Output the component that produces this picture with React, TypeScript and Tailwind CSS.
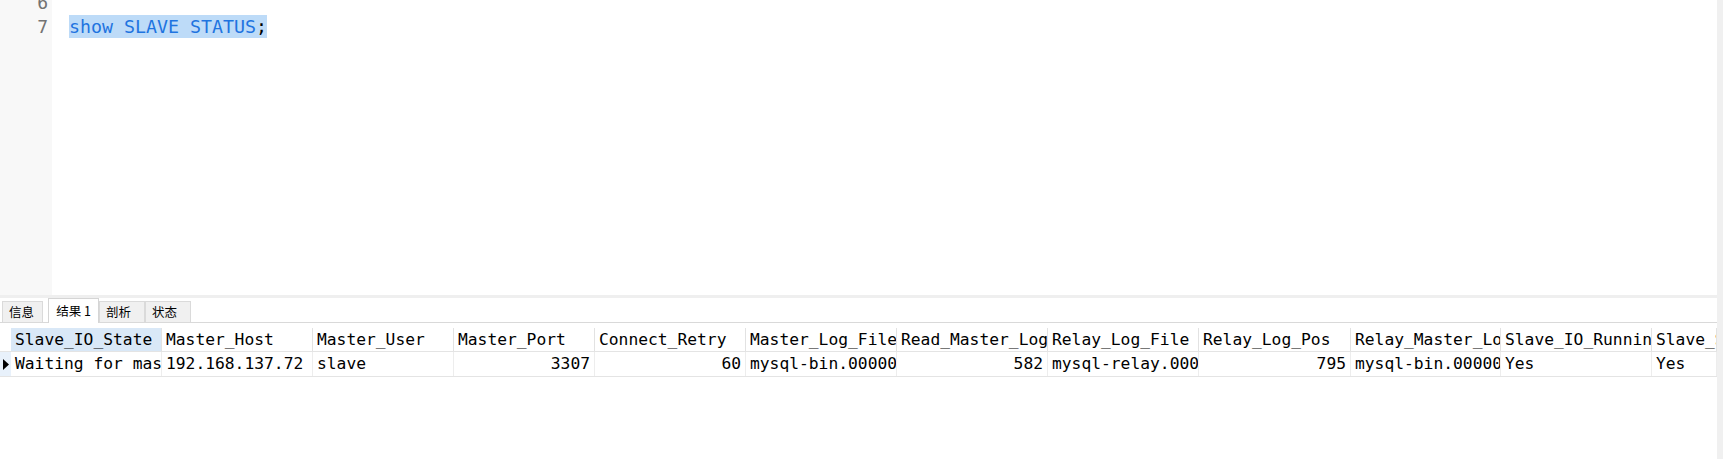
import React from 'react';

const mono = { fontFamily: '"DejaVu Sans Mono", "Liberation Mono", monospace' };

interface Column {
    name: string;
    value: string;
    width: string;
    right?: boolean;
}

const columns: Column[] = [
    { name: 'Slave_IO_State', value: 'Waiting for master to send event', width: 'w-[151px]' },
    { name: 'Master_Host', value: '192.168.137.72', width: 'w-[151px]' },
    { name: 'Master_User', value: 'slave', width: 'w-[141px]' },
    { name: 'Master_Port', value: '3307', width: 'w-[141px]', right: true },
    { name: 'Connect_Retry', value: '60', width: 'w-[151px]', right: true },
    { name: 'Master_Log_File', value: 'mysql-bin.000003', width: 'w-[151px]' },
    { name: 'Read_Master_Log_Pos', value: '582', width: 'w-[151px]', right: true },
    { name: 'Relay_Log_File', value: 'mysql-relay.000002', width: 'w-[151px]' },
    { name: 'Relay_Log_Pos', value: '795', width: 'w-[152px]', right: true },
    { name: 'Relay_Master_Log_File', value: 'mysql-bin.000003', width: 'w-[150px]' },
    { name: 'Slave_IO_Running', value: 'Yes', width: 'w-[151px]' },
    { name: 'Slave_SQL_Running', value: 'Yes', width: 'flex-1' },
];

const tabs = [
    { label: '信息', width: 'w-[41px]', active: false },
    { label: '结果 1', width: 'w-[51px]', active: true },
    { label: '剖析', width: 'w-[46px]', active: false },
    { label: '状态', width: 'w-[46px]', active: false },
];

export default function App() {
    return (
        <div className="w-[1723px] h-[459px] bg-white flex overflow-hidden text-black">
            <div className="flex-1 flex flex-col min-w-0">
                {/* editor */}
                <div className="h-[295px] flex shrink-0 overflow-hidden">
                    <div className="w-[52px] bg-[#f8f8f8] flex flex-col items-end pr-[4px] mt-[-9px] text-[18px] text-[#737373]" style={mono}>
                        <div className="h-[24px] leading-[24px]">6</div>
                        <div className="h-[24px] leading-[24px]">7</div>
                    </div>
                    <div className="flex-1 flex flex-col mt-[-9px] pl-[17px] text-[18.3px]" style={mono}>
                        <div className="h-[24px]" />
                        <div className="h-[24px] leading-[23px]">
                            <span className="bg-[#bddbf8] inline-block h-[23px]">
                                <span className="text-[#1f74e0]">show SLAVE STATUS</span>
                                <span className="text-black">;</span>
                            </span>
                        </div>
                    </div>
                </div>
                <div className="h-[3px] bg-[#efefef] shrink-0" />

                {/* tabs */}
                <div className="h-[25px] flex items-end border-b border-[#d9d9d9] shrink-0 pl-[2px]" style={{ fontFamily: '"Noto Sans CJK SC", "Noto Sans", sans-serif' }}>
                    {tabs.map((tab) =>
                        tab.active ? (
                            <div
                                key={tab.label}
                                className={`${tab.width} ml-[5px] h-[25px] mb-[-1px] bg-white border border-b-0 border-[#d5d5d5] flex items-center justify-center text-[12.5px] leading-none text-black`}
                            >
                                {tab.label}
                            </div>
                        ) : (
                            <div
                                key={tab.label}
                                className={`${tab.width} h-[21px] bg-[#f0f0f0] border border-b-0 border-[#dadada] flex items-center pl-[6px] text-[12.5px] leading-none text-black`}
                            >
                                {tab.label}
                            </div>
                        )
                    )}
                </div>

                {/* result grid */}
                <div className="pt-[5px] text-[16.3px] text-black" style={mono}>
                    <div className="h-[24px] flex border-b border-[#e4e4e4]">
                        <div className="w-[11px] shrink-0" />
                        {columns.map((col, i) => (
                            <div
                                key={col.name}
                                className={`${col.width} shrink-0 h-full overflow-hidden whitespace-nowrap pl-[4px] leading-[24px] border-r border-[#e2e2e2] ${i === 0 ? 'bg-[#d9e8f7]' : ''}`}
                            >
                                {col.name}
                            </div>
                        ))}
                    </div>
                    <div className="h-[25px] flex border-b border-[#e4e4e4]">
                        <div className="w-[11px] shrink-0 bg-[#e8f1fb] flex items-center pl-[3px]">
                            <svg width="6" height="11" viewBox="0 0 6 11">
                                <path d="M0 0 L6 5.5 L0 11 Z" fill="#000" />
                            </svg>
                        </div>
                        {columns.map((col) => (
                            <div
                                key={col.name}
                                className={`${col.width} shrink-0 h-full overflow-hidden whitespace-nowrap leading-[24px] border-r border-[#ededed] ${col.right ? 'text-right pr-[4px]' : 'pl-[4px]'}`}
                            >
                                {col.value}
                            </div>
                        ))}
                    </div>
                </div>
            </div>
            <div className="w-[6px] bg-[#f0f0f0] shrink-0" />
        </div>
    );
}
